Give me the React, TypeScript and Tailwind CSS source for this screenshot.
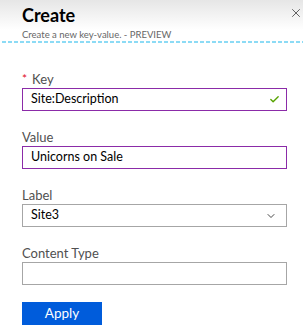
import { X, ChevronDown, Check } from "lucide-react";

const font = { fontFamily: 'Lato, "Open Sans", sans-serif' };

function FieldLabel({ text, required }: { text: string; required?: boolean }) {
  return (
    <div className="flex h-[18px] items-center text-[13px] leading-[18px] text-[#505050]">
      {required && <span className="mr-[5px] text-[12px] text-[#e00b1c]">*</span>}
      <span>{text}</span>
    </div>
  );
}

export default function App() {
  return (
    <div className="relative h-[331px] w-[303px] overflow-hidden bg-white" style={font}>
      {/* Header */}
      <div className="relative h-[43px] bg-gradient-to-b from-[#e6e6e6] to-white to-70% pl-[22px]">
        <div className="pt-[4px] text-[18px] font-bold leading-[22px] text-black">Create</div>
        <div className="mt-[3px] text-[9.5px] leading-[12px] text-[#666]">
          Create a new key-value. - PREVIEW
        </div>
        <X className="absolute right-[0px] top-[6px] h-[14px] w-[14px] text-[#333]" strokeWidth={1.3} />
        <svg className="absolute bottom-0 left-[2px]" width="301" height="2">
          <line x1="0" y1="1" x2="301" y2="1" stroke="#1ab8ec" strokeWidth="1.2" strokeDasharray="4 2" />
        </svg>
      </div>

      {/* Form */}
      <div className="flex flex-col gap-[17px] pl-[22px] pt-[27px]">
        <div>
          <FieldLabel text="Key" required />
          <div className="flex h-[23px] w-[265px] items-center justify-between border border-[#8b2ba8] pl-[8px] pr-[6px] text-[12.5px] text-black">
            <span>Site:Description</span>
            <Check className="h-[11px] w-[11px] text-[#57a300]" strokeWidth={3} />
          </div>
        </div>
        <div>
          <FieldLabel text="Value" />
          <div className="flex h-[23px] w-[265px] items-center border border-[#8b2ba8] pl-[8px] text-[12.5px] text-black">
            Unicorns on Sale
          </div>
        </div>
        <div>
          <FieldLabel text="Label" />
          <div className="flex h-[23px] w-[265px] items-center justify-between border border-[#a6a6a6] pl-[8px] pr-[9px] text-[12.5px] text-black">
            <span>Site3</span>
            <ChevronDown className="h-[12px] w-[12px] text-[#333]" strokeWidth={1.8} />
          </div>
        </div>
        <div>
          <FieldLabel text="Content Type" />
          <div className="h-[23px] w-[265px] border border-[#a6a6a6]" />
        </div>
        <button className="h-[23px] w-[80px] bg-[#005cdb] text-[13.5px] text-white">Apply</button>
      </div>
    </div>
  );
}
